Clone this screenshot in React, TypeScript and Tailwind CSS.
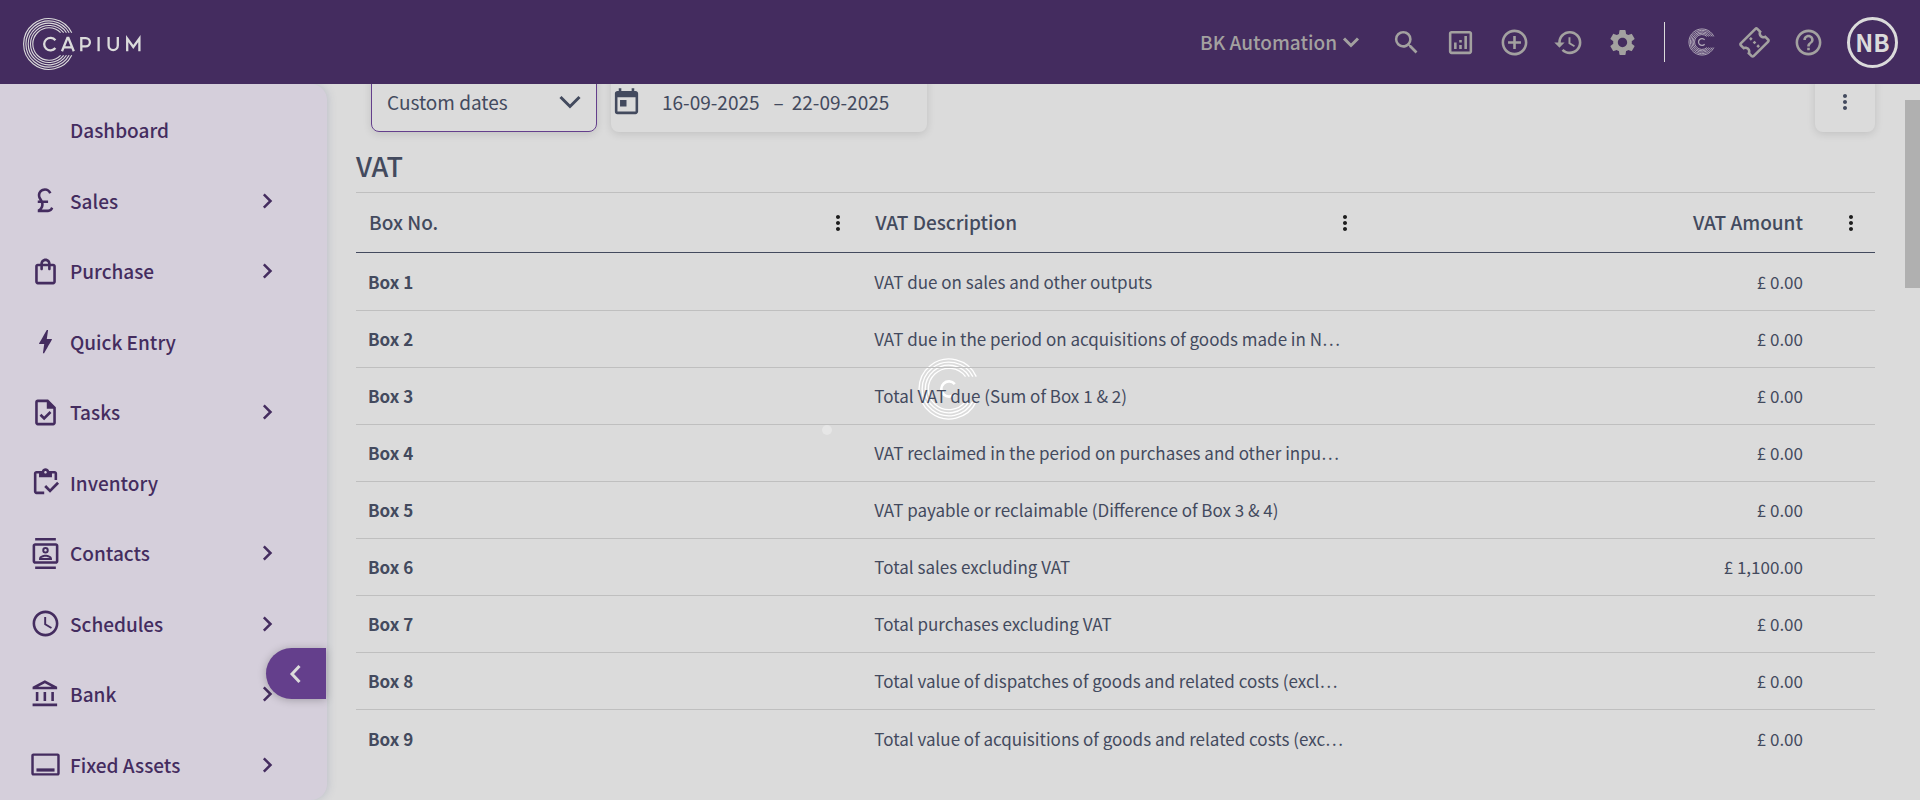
import React from "react";
import {
  MdAddCircleOutline,
  MdBolt,
  MdCurrencyPound,
  MdHistory,
  MdHelpOutline,
  MdMoreVert,
  MdOutlineAccountBalance,
  MdOutlineAnalytics,
  MdOutlineConfirmationNumber,
  MdOutlineContacts,
  MdOutlineInventory,
  MdOutlineShoppingBag,
  MdOutlineTask,
  MdSchedule,
  MdSearch,
  MdSettings,
  MdToday,
} from "react-icons/md";

function ringPath(r: number, gap: number) {
  const dx = Math.sqrt(r * r - gap * gap);
  return `M ${dx} ${-gap} A ${r} ${r} 0 1 0 ${dx} ${gap}`;
}

function Rings({ className, radii, width }: { className: string; radii: number[]; width: number }) {
  return (
    <svg viewBox="-30 -30 60 60" fill="none" stroke="currentColor" strokeWidth={width} className={className} aria-hidden="true">
      {radii.map((r) => (
        <path key={r} d={ringPath(r, 12)} />
      ))}
      <path d="M 5.600 -4.800 A 7.400 7.400 0 1 0 5.600 4.800" strokeWidth="2.600" />
    </svg>
  );
}

function Logo() {
  return (
    <svg viewBox="0 0 120 54" fill="none" stroke="currentColor" className="h-[54px] w-[120px]" role="img" aria-label="Capium">
      <g strokeWidth="1.1" transform="translate(27 27)">
        {[25.4, 23.1, 20.8, 18.5, 16.2].map((r) => (
          <path key={r} d={ringPath(r, 11.3)} />
        ))}
      </g>
      <g strokeWidth="2.3">
        <path d="M33.400 23.200 A6.300 6.300 0 1 0 33.400 31" />
        <path d="M40 34.200 L45.400 21 H46.400 L51.800 34.200 M42 30.400 H50" />
        <path d="M59.300 34.200 V21.200 H63.800 A4 4 0 0 1 63.800 29.400 H59.300" />
        <path d="M76.600 20 V34.200" />
        <path d="M86.600 20 V28.500 A4.600 4.600 0 0 0 95.800 28.500 V20" />
        <path d="M105.200 34.200 V21.600 L111.300 30 L117.400 21.600 V34.200" />
      </g>
    </svg>
  );
}

function PanelIcon() {
  return (
    <svg viewBox="0 0 24 24" fill="currentColor" className="size-[31px]" aria-hidden="true">
      <path fillRule="evenodd" d="M2.600 3.500h18.800c.9 0 1.600.7 1.600 1.600v13.800c0 .9-.7 1.600-1.600 1.600H2.600c-.9 0-1.600-.7-1.600-1.600V5.100c0-.9.7-1.600 1.600-1.600zM2.900 5.300v13.400h18.200V5.300z" />
      <path d="M5 15h14v2.500H5z" />
    </svg>
  );
}

function Chevron({ className, d }: { className: string; d: string }) {
  return (
    <svg viewBox="0 0 24 24" fill="none" stroke="currentColor" strokeWidth="3" className={className} aria-hidden="true">
      <path d={d} />
    </svg>
  );
}

const icon = "size-[31px]";

const nav = [
  { label: "Dashboard", icon: null, more: false },
  { label: "Sales", icon: <MdCurrencyPound className={icon} />, more: true },
  { label: "Purchase", icon: <MdOutlineShoppingBag className={icon} />, more: true },
  { label: "Quick Entry", icon: <MdBolt className={icon} />, more: false },
  { label: "Tasks", icon: <MdOutlineTask className={icon} />, more: true },
  { label: "Inventory", icon: <MdOutlineInventory className={icon} />, more: false },
  { label: "Contacts", icon: <MdOutlineContacts className={icon} />, more: true },
  { label: "Schedules", icon: <MdSchedule className={icon} />, more: true },
  { label: "Bank", icon: <MdOutlineAccountBalance className={icon} />, more: true },
  { label: "Fixed Assets", icon: <PanelIcon />, more: true },
];

const tools = [
  { label: "Search", el: <MdSearch className={icon} /> },
  { label: "Reports", el: <MdOutlineAnalytics className={icon} /> },
  { label: "Add", el: <MdAddCircleOutline className={icon} /> },
  { label: "History", el: <MdHistory className={icon} /> },
  { label: "Settings", el: <MdSettings className={icon} /> },
];

const rows = [
  ["Box 1", "VAT due on sales and other outputs", "£ 0.00"],
  ["Box 2", "VAT due in the period on acquisitions of goods made in N…", "£ 0.00"],
  ["Box 3", "Total VAT due (Sum of Box 1 & 2)", "£ 0.00"],
  ["Box 4", "VAT reclaimed in the period on purchases and other inpu…", "£ 0.00"],
  ["Box 5", "VAT payable or reclaimable (Difference of Box 3 & 4)", "£ 0.00"],
  ["Box 6", "Total sales excluding VAT", "£ 1,100.00"],
  ["Box 7", "Total purchases excluding VAT", "£ 0.00"],
  ["Box 8", "Total value of dispatches of goods and related costs (excl…", "£ 0.00"],
  ["Box 9", "Total value of acquisitions of goods and related costs (exc…", "£ 0.00"],
];

function Header() {
  return (
    <header className="relative z-20 flex h-[84px] shrink-0 items-center justify-between bg-[#442c5f] px-[22px] text-[#a3a1a0]">
      <a href="#" className="mt-1 text-[#dbdbdb]"><Logo /></a>
      <div className="flex items-center">
        <button className="mr-7 flex items-center gap-0.5 text-[19px] font-medium">
          BK Automation
          <Chevron className="size-6" d="M5 8.500l7 7 7-7" />
        </button>
        <div className="flex gap-[23px]">
          {tools.map((t) => (
            <button key={t.label} aria-label={t.label}>{t.el}</button>
          ))}
        </div>
        <div className="mr-[23px] ml-[26px] h-10 w-px bg-[#dbdbdb]" />
        <div className="flex items-center gap-[23px]">
          <button aria-label="Capium apps" className="text-[#b3abba]">
            <Rings className="size-7" radii={[28, 25, 22, 19, 16]} width={2} />
          </button>
          <button aria-label="Tickets"><MdOutlineConfirmationNumber className="size-[31px] -rotate-45" /></button>
          <button aria-label="Help"><MdHelpOutline className={icon} /></button>
          <button className="flex size-[51px] items-center justify-center rounded-full border-3 border-[#dbdbdb] text-2xl font-bold text-[#dbdbdb]">NB</button>
        </div>
      </div>
    </header>
  );
}

function Sidebar() {
  return (
    <nav className="relative z-10 flex w-[327px] shrink-0 flex-col rounded-r-2xl bg-[#d5cfdb] pt-[11px] shadow-[1px_0_8px_rgba(120,130,160,0.3)]">
      {nav.map((n) => (
        <a key={n.label} href="#" className="flex flex-1 items-center pr-[49px] pl-[30px] text-[19px] font-medium text-[#442c5f]">
          <span className="mr-[9px] w-[31px]">{n.icon}</span>
          <span className="flex-1">{n.label}</span>
          {n.more && <Chevron className="size-5" d="M7 4l8 8-8 8" />}
        </a>
      ))}
      <button aria-label="Collapse menu" className="absolute right-px bottom-[101px] flex h-[51px] w-[60px] items-center justify-center rounded-l-full bg-[#643f8c] text-[#dbdbdb] shadow-[0_1px_8px_rgba(0,0,0,0.25)]">
        <Chevron className="size-6" d="M15.500 4L8 12l7.500 8" />
      </button>
    </nav>
  );
}

export default function App() {
  return (
    <div className="relative isolate flex h-screen flex-col overflow-hidden bg-[#dbdbdb] font-['Noto_Sans_CJK_SC',sans-serif] text-[#434a5e]">
      <Header />
      <div className="flex min-h-0 flex-1">
        <Sidebar />
        <main className="min-w-0 flex-1 overflow-hidden pr-[30px] pl-[29px]">
          <div className="-mt-3 flex h-[60px] pl-[15px]">
            <button className="flex w-[226px] items-center justify-between rounded-lg border border-[#643f8c] pr-[14px] pl-[15px] text-[19px] shadow-[0_2px_8px_rgba(0,0,0,0.12)]">
              Custom dates
              <Chevron className="size-6" d="M2.500 7l9.500 9.500L21.500 7" />
            </button>
            <button className="ml-[14px] flex w-[316px] items-center rounded-lg text-[19px] shadow-[0_2px_8px_rgba(0,0,0,0.12)]">
              <MdToday className={icon} />
              <span className="ml-5">16-09-2025</span>
              <span className="ml-[14px]">–</span>
              <span className="ml-2">22-09-2025</span>
            </button>
            <button aria-label="More options" className="ml-auto flex w-[60px] items-center justify-center rounded-lg shadow-[0_2px_8px_rgba(0,0,0,0.12)]">
              <MdMoreVert className="size-6" />
            </button>
          </div>
          <h1 className="flex h-[60px] items-center pt-2 text-[27px] font-medium">VAT</h1>
          <table className="w-full table-fixed border-collapse text-left">
            <thead>
              <tr className="h-[60px] border-t border-b border-t-[#bfbfbf] border-b-[#434a5e] text-[19px]">
                {["Box No.", "VAT Description", "VAT Amount"].map((h, i) => (
                  <th key={h} className="pr-3 pl-[13px] font-medium">
                    <div className="flex items-center justify-between">
                      <span className={i === 2 ? "flex-1 pr-9 text-right" : ""}>{h}</span>
                      <button aria-label={`${h} menu`} className="text-[#1d1d1d]"><MdMoreVert className="size-6" /></button>
                    </div>
                  </th>
                ))}
              </tr>
            </thead>
            <tbody className="text-[17px]">
              {rows.map(([box, desc, amount]) => (
                <tr key={box} className="h-[57px] border-b border-[#bfbfbf] first:h-[58px] last:border-b-0">
                  <th scope="row" className="px-3 font-bold">{box}</th>
                  <td className="truncate pl-3">{desc}</td>
                  <td className="pr-[72px] text-right">{amount}</td>
                </tr>
              ))}
            </tbody>
          </table>
        </main>
        <div className="w-[15px] shrink-0 pt-4">
          <div className="h-[188px] bg-[#b0b0b0]" />
        </div>
      </div>
      <div role="status" aria-label="Loading" className="pointer-events-none absolute inset-0 -z-10 flex items-center justify-center text-white">
        <div className="absolute top-[425px] left-[43%] -ml-1 size-[10px] rounded-full bg-white/30" />
        <Rings className="mr-[22px] mb-[22px] size-[62px]" radii={[29, 26, 23, 20]} width={1.3} />
      </div>
    </div>
  );
}
